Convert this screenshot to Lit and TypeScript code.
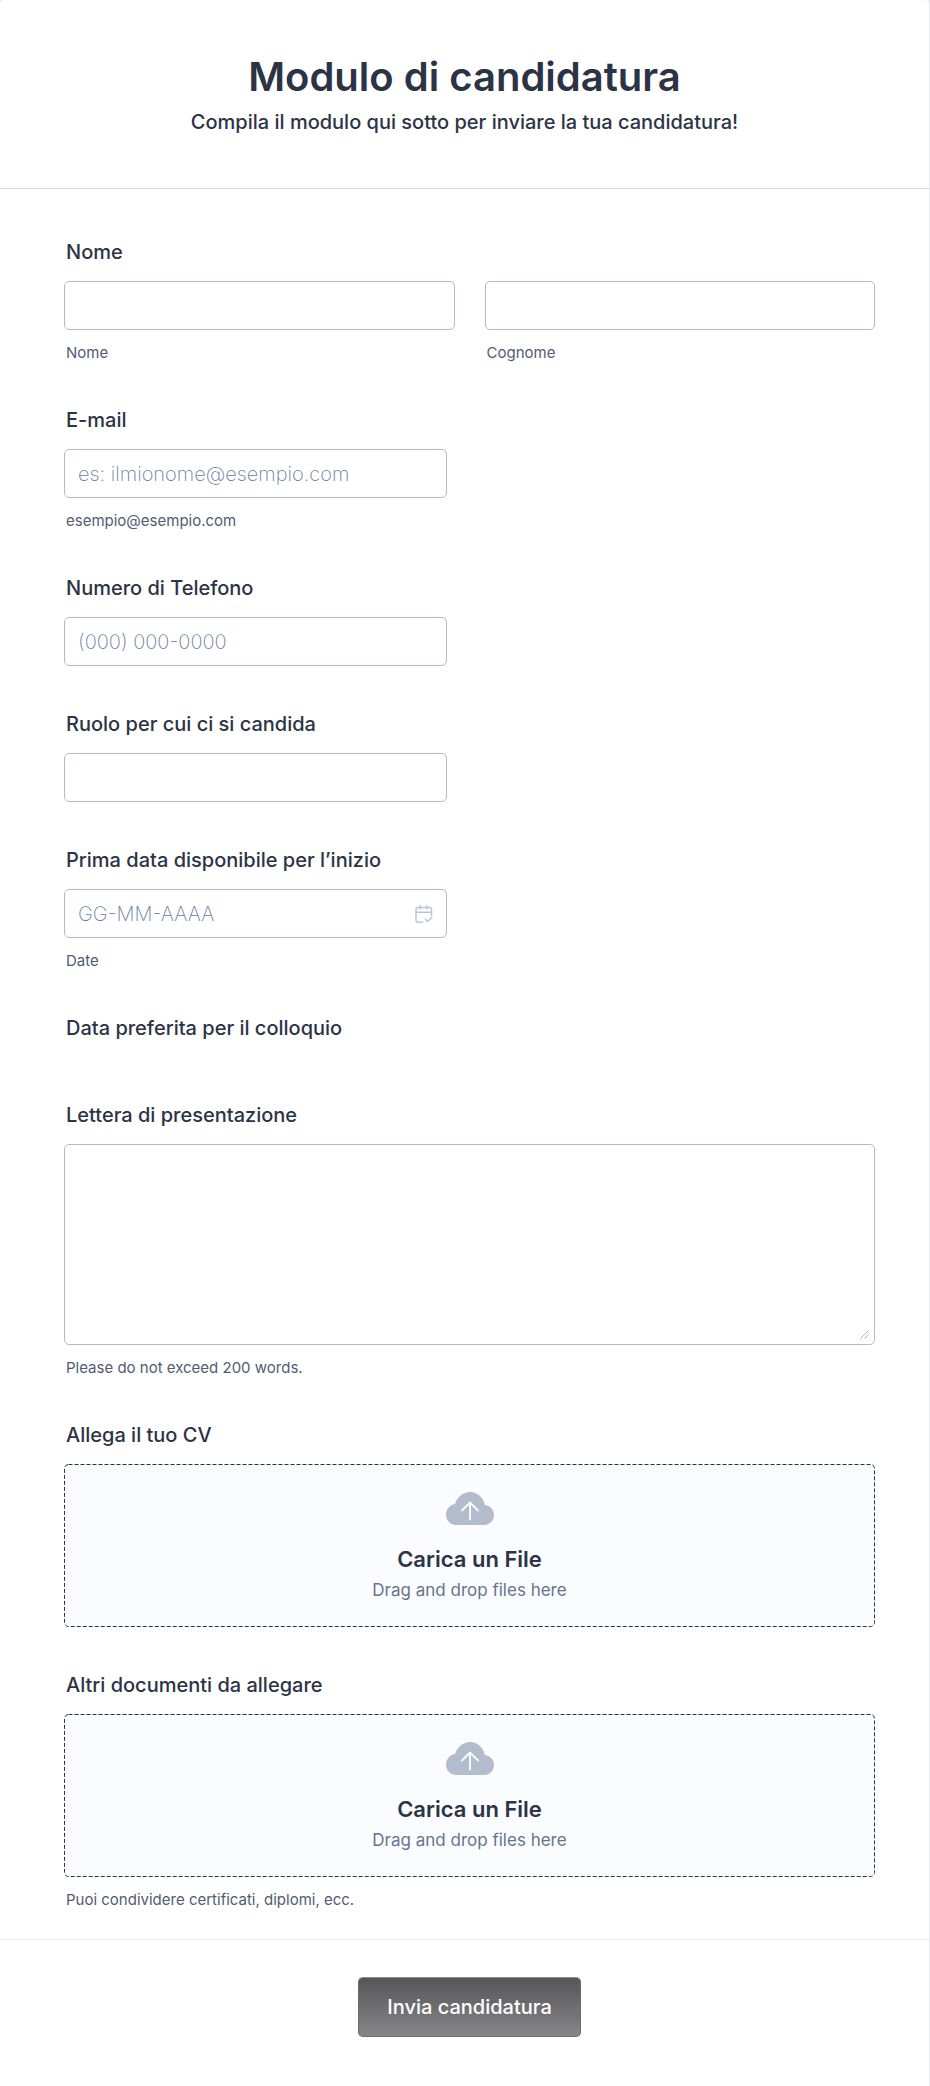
import { LitElement, html, css, svg, nothing } from "lit";
import { customElement, property } from "lit/decorators.js";

const cloudIcon = svg`
  <path fill="#b3bccc" d="M10.4 33C4.4 33 0 28.400 0 22.800C0 17.400 3.600 13 9 12C11 5 17 0 24 0C31.500 0 37.600 5.600 38.800 13C44 13.600 48 17.600 48 23C48 28.700 43.700 33 38 33Z"/>
  <path fill="none" stroke="#fbfcff" stroke-width="1.800" stroke-linecap="round" stroke-linejoin="round" d="M24 27.500V10.500M16 18.500L24 10.500L32 18.500"/>`;

const calendarIcon = svg`
  <path fill="none" stroke="#bcc3d3" stroke-width="1.500" stroke-linecap="round" stroke-linejoin="round"
    d="M7.500 17.200H3Q1 17.200 1 15.200V4.500Q1 2.500 3 2.500H14.500Q16.500 2.500 16.500 4.500V10.500M1 7.300H16.500M5.300 0.800V4M12 0.800V4M10.500 14.500L12.500 16.500L16.800 12.500"/>`;

const base = css`
  * {
    box-sizing: border-box;
  }
  .label {
    display: block;
    padding-left: 2px;
    font-size: 20px;
    line-height: 24px;
    font-weight: 500;
    color: #2c3345;
  }
  .hint {
    display: block;
    margin-top: 14px;
    padding-left: 2px;
    font-size: 15px;
    line-height: 18px;
    color: #505c72;
  }
  .body {
    margin-top: 17px;
  }
  .control {
    display: block;
    width: 100%;
    height: 49px;
    margin: 0;
    padding: 0 13px;
    border: 1px solid #b4bacc;
    border-radius: 5px;
    background: #fff;
    font: 200 20px/24px Inter, sans-serif;
    color: #2c3345;
  }
  .control::placeholder,
  .bare::placeholder {
    color: #6c809c;
    opacity: 1;
  }
`;

@customElement("text-field")
class TextField extends LitElement {
  @property() label = "";
  @property() hint = "";
  @property() placeholder = "";
  @property() type = "text";
  @property({ type: Boolean }) calendar = false;

  static styles = [
    base,
    css`
      :host {
        display: block;
      }
      .narrow {
        max-width: 383px;
      }
      .shell {
        display: flex;
        align-items: center;
      }
      .bare {
        flex: 1;
        min-width: 0;
        padding: 0;
        border: 0;
        outline: 0;
        background: none;
        font: inherit;
        color: inherit;
      }
      .pick {
        display: flex;
        padding: 0;
        border: 0;
        background: none;
        cursor: pointer;
      }
    `,
  ];

  render() {
    return html`
      <label class="label" for="control">${this.label}</label>
      <div class="body narrow">
        ${this.calendar
          ? html`<div class="control shell">
              <input class="bare" id="control" type="text" placeholder=${this.placeholder} />
              <button class="pick" type="button" aria-label="Calendario">
                <svg width="18" height="18" viewBox="0 0 18 18" aria-hidden="true">${calendarIcon}</svg>
              </button>
            </div>`
          : html`<input class="control" id="control" type=${this.type} placeholder=${this.placeholder} />`}
      </div>
      ${this.hint ? html`<span class="hint">${this.hint}</span>` : nothing}
    `;
  }
}

@customElement("upload-field")
class UploadField extends LitElement {
  @property() label = "";
  @property() hint = "";

  static styles = [
    base,
    css`
      :host {
        display: block;
      }
      .drop {
        position: relative;
        display: flex;
        flex-direction: column;
        align-items: center;
        width: 100%;
        padding: 28px 20px 24px;
        border: 0;
        border-radius: 5px;
        background: #fbfcff;
        font-family: inherit;
        cursor: pointer;
      }
      .outline {
        position: absolute;
        inset: 0;
        width: 100%;
        height: 100%;
        padding: 1px 0 0 1px;
        overflow: visible;
        pointer-events: none;
      }
      .dashes {
        fill: none;
        stroke: #2c3345;
        stroke-width: 1px;
        stroke-dasharray: 4 2;
        width: 100%;
        height: 100%;
      }
      .action {
        margin-top: 20px;
        font-size: 22px;
        line-height: 28px;
        font-weight: 600;
        color: #2c3345;
      }
      .note {
        margin-top: 4px;
        font-size: 17px;
        line-height: 26px;
        color: #66748d;
      }
    `,
  ];

  render() {
    return html`
      <label class="label" for="drop">${this.label}</label>
      <div class="body">
        <button class="drop" id="drop" type="button">
          <svg class="outline" aria-hidden="true"><rect class="dashes" x="-.5" y="-.5" rx="4" /></svg>
          <svg width="48" height="33" viewBox="0 0 48 33" aria-hidden="true">${cloudIcon}</svg>
          <span class="action">Carica un File</span>
          <span class="note">Drag and drop files here</span>
        </button>
      </div>
      ${this.hint ? html`<span class="hint">${this.hint}</span>` : nothing}
    `;
  }
}

@customElement("app-root")
class AppRoot extends LitElement {
  static styles = [
    base,
    css`
      :host {
        display: block;
        min-height: 100vh;
        font-family: Inter, sans-serif;
        background: #e7e8f2;
      }
      .form {
        min-height: 100vh;
        margin-right: 1px;
        border-radius: 4px 4px 0 0;
        background: #fff;
      }
      .header {
        padding: 52px 20px 54px;
        border-bottom: 1px solid #d6dae7;
        text-align: center;
        color: #2c3345;
      }
      .title {
        margin: 0;
        font-size: 40px;
        line-height: 50px;
        font-weight: 600;
      }
      .subtitle {
        margin: 8px 0 0;
        font-size: 20px;
        line-height: 24px;
        font-weight: 500;
      }
      .fields {
        display: flex;
        flex-direction: column;
        gap: 46px;
        padding: 51px 54px 30px 64px;
      }
      .pair {
        display: grid;
        grid-template-columns: 1fr 1fr;
        gap: 30px;
      }
      .letter {
        position: relative;
      }
      .area {
        height: 201px;
        padding: 12px 13px;
        resize: vertical;
      }
      .area::-webkit-resizer {
        background: transparent;
      }
      .grip {
        position: absolute;
        right: 6px;
        bottom: 6px;
        pointer-events: none;
      }
      .footer {
        display: flex;
        justify-content: center;
        padding: 37px 54px 48px 64px;
        border-top: 1px solid #e4e6f1;
      }
      .submit {
        height: 60px;
        padding: 0 28px;
        border: 1px solid #6c6c6e;
        border-top-color: #8b8c8e;
        border-radius: 5px;
        background: linear-gradient(#565658, #868688);
        font: 500 20px/24px Inter, sans-serif;
        color: #fff;
        cursor: pointer;
      }
    `,
  ];

  render() {
    return html`
      <form class="form">
        <header class="header">
          <h1 class="title">Modulo di candidatura</h1>
          <p class="subtitle">Compila il modulo qui sotto per inviare la tua candidatura!</p>
        </header>
        <div class="fields">
          <div role="group" aria-labelledby="name-label">
            <span class="label" id="name-label">Nome</span>
            <div class="body pair">
              <div>
                <input class="control" id="first" type="text" />
                <label class="hint" for="first">Nome</label>
              </div>
              <div>
                <input class="control" id="last" type="text" />
                <label class="hint" for="last">Cognome</label>
              </div>
            </div>
          </div>
          <text-field label="E-mail" type="email" placeholder="es: ilmionome@esempio.com" hint="esempio@esempio.com"></text-field>
          <text-field label="Numero di Telefono" type="tel" placeholder="(000) 000-0000"></text-field>
          <text-field label="Ruolo per cui ci si candida"></text-field>
          <text-field label="Prima data disponibile per l’inizio" placeholder="GG-MM-AAAA" hint="Date" calendar></text-field>
          <div>
            <span class="label">Data preferita per il colloquio</span>
            <div class="body"></div>
          </div>
          <div>
            <label class="label" for="letter">Lettera di presentazione</label>
            <div class="body letter">
              <textarea class="control area" id="letter"></textarea>
              <svg class="grip" width="9" height="9" viewBox="0 0 9 9" aria-hidden="true">
                <path d="M0.500 8.500L8.500 0.500M4.500 8.500L8.500 4.500" stroke="#b0b7c6" fill="none" />
              </svg>
            </div>
            <span class="hint">Please do not exceed 200 words.</span>
          </div>
          <upload-field label="Allega il tuo CV"></upload-field>
          <upload-field label="Altri documenti da allegare" hint="Puoi condividere certificati, diplomi, ecc."></upload-field>
        </div>
        <footer class="footer">
          <button class="submit" type="button">Invia candidatura</button>
        </footer>
      </form>
    `;
  }
}
